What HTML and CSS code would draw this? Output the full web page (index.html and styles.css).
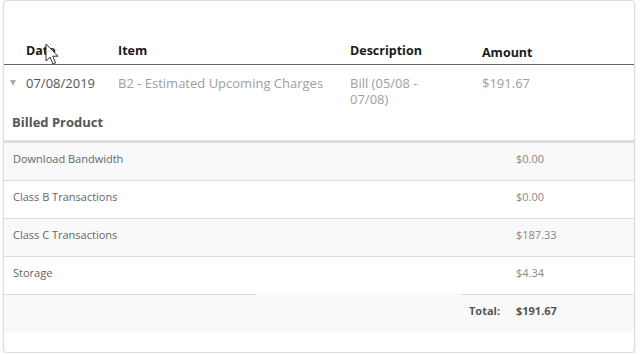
FILE: index.html
```html
<!DOCTYPE html>
<html lang="en">
<head>
    <meta charset="UTF-8">
    <meta name="viewport" content="width=device-width, initial-scale=1.0">
    <title>Billing History</title>
    <link rel="stylesheet" href="styles.css">
</head>
<body>
<div class="card">
    <table class="main-table">
        <colgroup>
            <col class="col-date">
            <col class="col-item">
            <col class="col-desc">
            <col>
        </colgroup>
        <thead>
            <tr>
                <th class="th-date">Date</th>
                <th>Item</th>
                <th>Description</th>
                <th class="th-amount">Amount</th>
            </tr>
        </thead>
        <tbody>
            <tr>
                <td class="td-date"><span class="caret"></span>07/08/2019</td>
                <td class="muted">B2 - Estimated Upcoming Charges</td>
                <td class="muted desc">Bill (05/08 - 07/08)</td>
                <td class="muted">$191.67</td>
            </tr>
        </tbody>
    </table>

    <div class="section-title">Billed Product</div>

    <table class="product-table">
        <colgroup>
            <col class="col-name">
            <col class="col-gap">
            <col class="col-label">
            <col>
        </colgroup>
        <tbody>
            <tr class="odd">
                <td colspan="3">Download Bandwidth</td>
                <td class="price">$0.00</td>
            </tr>
            <tr>
                <td colspan="3">Class B Transactions</td>
                <td class="price">$0.00</td>
            </tr>
            <tr class="odd">
                <td colspan="3">Class C Transactions</td>
                <td class="price">$187.33</td>
            </tr>
            <tr class="last">
                <td colspan="3">Storage</td>
                <td class="price">$4.34</td>
            </tr>
            <tr class="total-row">
                <td></td>
                <td class="no-line"></td>
                <td class="total-label">Total:</td>
                <td class="total-value">$191.67</td>
            </tr>
        </tbody>
    </table>

    <!-- mouse pointer from the capture -->
    <svg class="cursor" width="14" height="23" viewBox="0 0 14 23">
        <path d="M1 1 L1 18 L5 14.2 L8 21 L10.6 19.9 L7.7 13.2 L13 13.2 Z" fill="#fff" stroke="#333" stroke-width="1" stroke-linejoin="round"/>
    </svg>
</div>
</body>
</html>
```

FILE: styles.css
```css
body {
    margin: 0;
    font-family: 'Open Sans', 'Liberation Sans', sans-serif;
    background: #fff;
}

.card {
    position: relative;
    width: 632px;
    height: 353px;
    margin-left: 3px;
    box-sizing: border-box;
    background: #fff;
    border: 1px solid #ddd;
    border-radius: 4px;
    box-shadow: 0 1px 2px rgba(0, 0, 0, 0.12);
}

/* Tabla principal */
.main-table {
    width: 100%;
    table-layout: fixed;
    border-collapse: collapse;
}

    .main-table .col-date {
        width: 106px;
    }

    .main-table .col-item {
        width: 232px;
    }

    .main-table .col-desc {
        width: 132px;
    }

    .main-table th {
        text-align: left;
        vertical-align: top;
        font-size: 12.5px;
        font-weight: 700;
        line-height: 18px;
        color: #1a1a1a;
        padding: 41px 8px 4px 8px;
        border-bottom: 1px solid #666;
    }

        .main-table th.th-date {
            padding-left: 22px;
        }

        .main-table th.th-amount {
            padding-top: 43px;
            padding-bottom: 2px;
        }

    .main-table td {
        vertical-align: top;
        font-size: 13px;
        line-height: 16px;
        color: #555;
        padding: 10px 8px 0 8px;
    }

        .main-table td.td-date {
            padding-left: 6px;
            white-space: nowrap;
        }

        .main-table td.desc {
            padding-right: 24px;
        }

.muted {
    color: #a0a0a0 !important;
}

.caret {
    display: inline-block;
    width: 0;
    height: 0;
    border-left: 3.5px solid transparent;
    border-right: 3.5px solid transparent;
    border-top: 6px solid #aaa;
    margin-right: 10px;
    vertical-align: 2px;
}

.section-title {
    font-size: 13px;
    font-weight: 700;
    line-height: 16px;
    color: #555;
    padding: 7px 8px 10px 8px;
}

/* Tabla de productos */
.product-table {
    width: 100%;
    table-layout: fixed;
    border-collapse: collapse;
    border-top: 3px solid #ddd;
}

    .product-table .col-name {
        width: 252px;
    }

    .product-table .col-gap {
        width: 205px;
    }

    .product-table .col-label {
        width: 47px;
    }

    .product-table td {
        font-size: 11px;
        line-height: 15px;
        color: #666;
        padding: 8px 8px 14px 9px;
        height: 15px;
    }

    .product-table tr {
        border-bottom: 1px solid #ddd;
    }

        .product-table tr.odd {
            background: #f9f9f9;
        }

        .product-table tr.last {
            border-bottom: none;
        }

    .product-table td.price {
        color: #888;
        padding-left: 8px;
    }

    .product-table tr.total-row {
        border-bottom: none;
        background: #f9f9f9;
    }

        .product-table tr.total-row td {
            border-top: 1px solid #ddd;
        }

            .product-table tr.total-row td.no-line {
                border-top: none;
            }

    .product-table .total-label,
    .product-table .total-value {
        font-weight: 700;
        color: #555 !important;
        padding-left: 8px;
    }

.cursor {
    position: absolute;
    left: 41px;
    top: 42px;
}
```
